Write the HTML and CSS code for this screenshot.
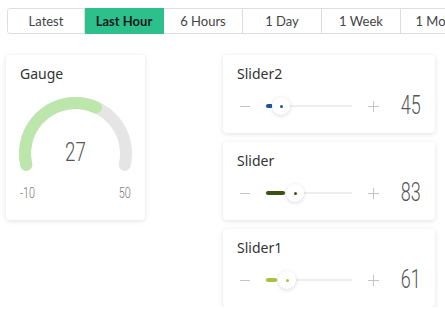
FILE: index.html
```html
<!DOCTYPE html>
<html lang="en">
<head>
    <meta charset="UTF-8">
    <meta name="viewport" content="width=device-width, initial-scale=1.0">
    <title>Dashboard</title>
    <link rel="stylesheet" href="styles.css">
</head>
<body>

<div class="tabs">
    <div class="tab">Latest</div>
    <div class="tab active">Last Hour</div>
    <div class="tab">6 Hours</div>
    <div class="tab">1 Day</div>
    <div class="tab">1 Week</div>
    <div class="tab">1 Month</div>
</div>

<div class="main">
    <div class="card gauge">
        <div class="title">Gauge</div>
        <svg class="gauge-svg" width="139" height="102" viewBox="0 28 139 102">
            <path d="M20.3 109.9 A50.5 50.5 0 1 1 118.7 109.9" fill="none" stroke="#e5e5e5" stroke-width="12" stroke-linecap="round"/>
            <path d="M20.3 109.9 A50.5 50.5 0 0 1 90 52.4" fill="none" stroke="#bde6ad" stroke-width="12" stroke-linecap="round"/>
            <text class="gauge-value" transform="translate(69.5 106) scale(0.72 1)" text-anchor="middle">27</text>
        </svg>
        <div class="range">
            <span class="num min">-10</span>
            <span class="num max">50</span>
        </div>
    </div>

    <div class="sliders">
        <div class="card slider">
            <div class="title">Slider2</div>
            <div class="row">
                <span class="minus"></span>
                <div class="track">
                    <div class="fill blue" style="width: 7px"></div>
                    <div class="thumb" style="left: 16px"><span class="dot blue"></span></div>
                </div>
                <span class="plus"></span>
                <span class="num value">45</span>
            </div>
        </div>
        <div class="card slider">
            <div class="title">Slider</div>
            <div class="row">
                <span class="minus"></span>
                <div class="track">
                    <div class="fill olive" style="width: 19px"></div>
                    <div class="thumb" style="left: 30px"><span class="dot olive"></span></div>
                </div>
                <span class="plus"></span>
                <span class="num value">83</span>
            </div>
        </div>
        <div class="card slider">
            <div class="title">Slider1</div>
            <div class="row">
                <span class="minus"></span>
                <div class="track">
                    <div class="fill lime" style="width: 11px"></div>
                    <div class="thumb" style="left: 22px"><span class="dot lime"></span></div>
                </div>
                <span class="plus"></span>
                <span class="num value">61</span>
            </div>
        </div>
    </div>
</div>

</body>
</html>
```

FILE: styles.css
```css
body {
    margin: 0;
    background: #fff;
    overflow: hidden;
    font-family: "Noto Sans", Arial, sans-serif;
}

.tabs {
    display: flex;
    margin: 8px 0 0 7px;
    width: 600px;
}

.tab {
    box-sizing: border-box;
    flex: 0 0 79px;
    height: 26px;
    line-height: 24px;
    text-align: center;
    font-family: Lato, Arial, sans-serif;
    font-size: 13px;
    color: #444;
    border: 1px solid #dedede;
    border-left: none;
}

.tab:first-child {
    flex-basis: 78px;
    border-left: 1px solid #dedede;
    border-radius: 3px 0 0 3px;
}

.tab.active {
    background: #2cc08d;
    border-color: #2cc08d;
    color: #1a1a1a;
    font-weight: 700;
}

.main {
    display: flex;
    align-items: flex-start;
    margin-top: 21px;
    padding-left: 6px;
}

.card {
    box-sizing: border-box;
    background: #fff;
    border-radius: 4px;
    box-shadow: 0 1px 5px rgba(0, 0, 0, 0.12);
}

.title {
    font-size: 14px;
    line-height: 18px;
    color: #333;
}

.gauge {
    width: 139px;
    height: 165px;
    padding-top: 10px;
}

.gauge .title {
    padding-left: 14px;
}

.gauge-svg {
    display: block;
}

.gauge-value {
    font-family: Roboto, sans-serif;
    font-weight: 300;
    font-size: 26px;
    fill: #555;
}

.num {
    display: inline-block;
    font-family: Roboto, sans-serif;
    font-weight: 300;
    transform: scaleX(0.72);
}

.range {
    display: flex;
    justify-content: space-between;
    padding: 0 14px;
    font-size: 15px;
    line-height: 16px;
    color: #777;
}

.range .min {
    transform-origin: left center;
}

.range .max {
    transform-origin: right center;
}

.sliders {
    display: flex;
    flex-direction: column;
    gap: 9px;
    margin-left: 78px;
}

.slider {
    width: 212px;
    height: 78px;
    padding: 10px 14px 0 14px;
}

.row {
    display: flex;
    align-items: center;
    height: 20px;
    margin-top: 13px;
    padding-left: 3px;
}

.minus {
    width: 10px;
    height: 1px;
    background: #c4c4c4;
    margin-right: 15px;
}

.track {
    position: relative;
    width: 87px;
    height: 20px;
    margin-right: 16px;
}

.track::before {
    content: "";
    position: absolute;
    left: 0;
    right: 0;
    top: 9px;
    height: 2px;
    background: #eeeeee;
}

.fill {
    position: absolute;
    left: 1px;
    top: 8px;
    height: 4px;
    border-radius: 2px;
}

.thumb {
    position: absolute;
    top: 1px;
    width: 18px;
    height: 18px;
    margin-left: -9px;
    border-radius: 50%;
    background: #fff;
    box-shadow: 0 1px 4px rgba(0, 0, 0, 0.15);
    display: flex;
    align-items: center;
    justify-content: center;
}

.dot {
    width: 3px;
    height: 3px;
    border-radius: 50%;
}

.blue {
    background: #1b5796;
}

.olive {
    background: #3a5212;
}

.lime {
    background: #a5c43c;
}

.plus {
    position: relative;
    width: 11px;
    height: 11px;
}

.plus::before,
.plus::after {
    content: "";
    position: absolute;
    background: #c4c4c4;
}

.plus::before {
    left: 0;
    right: 0;
    top: 5px;
    height: 1px;
}

.plus::after {
    top: 0;
    bottom: 0;
    left: 5px;
    width: 1px;
}

.value {
    margin-left: auto;
    font-size: 25px;
    line-height: 20px;
    color: #555;
    transform-origin: right center;
}
```
